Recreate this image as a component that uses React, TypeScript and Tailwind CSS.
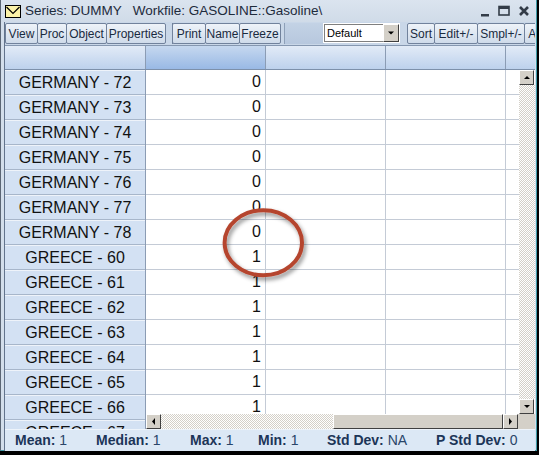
import React from "react";

const rows: [string, string][] = [
  ["GERMANY - 72", "0"],
  ["GERMANY - 73", "0"],
  ["GERMANY - 74", "0"],
  ["GERMANY - 75", "0"],
  ["GERMANY - 76", "0"],
  ["GERMANY - 77", "0"],
  ["GERMANY - 78", "0"],
  ["GREECE - 60", "1"],
  ["GREECE - 61", "1"],
  ["GREECE - 62", "1"],
  ["GREECE - 63", "1"],
  ["GREECE - 64", "1"],
  ["GREECE - 65", "1"],
  ["GREECE - 66", "1"],
  ["GREECE - 67", "1"],
];

const Btn = ({ label, w }: { label: string; w: string }) => (
  <div
    className={`${w} h-[21px] shrink-0 flex items-center justify-center border border-[#71829c] rounded-[2px] bg-gradient-to-b from-[#eef3f9] to-[#cfdbea] text-[12px] text-[#1a2a40] -ml-px first:ml-0`}
  >
    {label}
  </div>
);

const Arrow = ({ dir }: { dir: "up" | "down" | "left" | "right" }) => {
  const pts =
    dir === "up"
      ? "1,5 4,2 7,5"
      : dir === "down"
      ? "1,2 4,5 7,2"
      : dir === "left"
      ? "5,0 2,3.5 5,7"
      : "2,0 5,3.5 2,7";
  return (
    <div className="w-[15px] h-[15px] shrink-0 bg-[#d4d0c8] border-t border-l border-t-white border-l-white border-r border-b border-r-[#404040] border-b-[#404040] flex items-center justify-center">
      <svg width="8" height="8" viewBox="0 0 8 8">
        <polygon points={pts} fill="#000" />
      </svg>
    </div>
  );
};

const checker =
  "bg-[repeating-conic-gradient(#d4d0c8_0%_25%,#ffffff_0%_50%)] bg-[length:2px_2px]";

export default function App() {
  return (
    <div
      className="w-[539px] h-[455px] bg-black relative overflow-hidden"
      style={{ fontFamily: '"Liberation Sans", Arial, sans-serif' }}
    >
      <div className="w-[537px] h-[451px] bg-[#d3deeb] border-l border-l-[#5b6675] border-r border-b border-r-[#3f9aa6] border-b-[#3f9aa6] flex flex-col">
        {/* title bar */}
        <div className="h-[22px] shrink-0 flex items-center bg-gradient-to-b from-[#dbe4ef] to-[#d0dbe8]">
          <svg width="16" height="13" viewBox="0 0 16 13" className="ml-[4px]">
            <rect x="0.5" y="0.5" width="15" height="12" fill="#fbf2a8" stroke="#000" />
            <polyline points="1.5,2 8,8.5 14.5,2" fill="none" stroke="#000" strokeWidth="1.2" />
          </svg>
          <span className="ml-[4px] text-[13.5px] text-[#1e2b3c] whitespace-pre">
            {"Series: DUMMY   Workfile: GASOLINE::Gasoline\\"}
          </span>
          <div className="ml-auto mr-[6px] flex items-center gap-[8px] text-[#333c48]">
            <svg width="10" height="12" viewBox="0 0 10 12">
              <rect x="1" y="9" width="8" height="2.5" fill="#333c48" />
            </svg>
            <svg width="12" height="12" viewBox="0 0 12 12">
              <rect x="1" y="1.5" width="10" height="8.5" fill="none" stroke="#333c48" strokeWidth="1.6" />
              <rect x="1" y="1.5" width="10" height="2.5" fill="#333c48" />
            </svg>
            <svg width="12" height="12" viewBox="0 0 12 12">
              <path d="M2 2 L10 10 M10 2 L2 10" stroke="#333c48" strokeWidth="2.6" />
            </svg>
          </div>
        </div>

        {/* client */}
        <div className="ml-[3px] w-[531px] flex-1 flex flex-col border-l border-l-[#62738c]">
          {/* toolbar */}
          <div className="h-[23px] shrink-0 flex items-start pt-[1px] bg-[#c9d7e8] overflow-hidden">
            <Btn label="View" w="w-[33px]" />
            <Btn label="Proc" w="w-[30px]" />
            <Btn label="Object" w="w-[41px]" />
            <Btn label="Properties" w="w-[60px]" />
            <div className="w-[6px] shrink-0" />
            <div className="w-px h-[21px] bg-[#71829c] shrink-0" />
            <Btn label="Print" w="w-[34px]" />
            <Btn label="Name" w="w-[35px]" />
            <Btn label="Freeze" w="w-[42px]" />
            <div className="w-[3px] shrink-0" />
            <div className="w-[40px] h-[21px] shrink-0 border-l border-[#8ea0b8] bg-gradient-to-b from-[#c3d2e5] to-[#b7c8de]" />
            <div className="w-[77px] h-[20px] shrink-0 border border-white bg-white flex items-center -ml-[1px]">
              <div className="flex-1 h-[18px] border border-[#7f7f7f] border-r-0 flex items-center pl-[2px] text-[11px] text-black">
                Default
              </div>
              <div className="w-[16px] h-[18px] bg-[#d4d0c8] border-t border-l border-t-white border-l-white border-r border-b border-r-[#404040] border-b-[#404040] flex items-center justify-center">
                <svg width="8" height="6" viewBox="0 0 8 6">
                  <polygon points="1,1.5 7,1.5 4,4.5" fill="#000" />
                </svg>
              </div>
            </div>
            <div className="w-[8px] shrink-0" />
            <Btn label="Sort" w="w-[28px]" />
            <Btn label="Edit+/-" w="w-[44px]" />
            <Btn label="Smpl+/-" w="w-[48px]" />
            <Btn label="Add" w="w-[30px]" />
          </div>

          {/* header row */}
          <div className="h-[25px] shrink-0 flex border-t border-t-[#8597b0] border-b border-b-[#7d90aa]">
            <div className="w-[141px] shrink-0 border-r border-r-[#8b9cb4] bg-gradient-to-b from-[#e2ebf7] to-[#bdd1ec]" />
            <div className="w-[120px] shrink-0 border-r border-r-[#8b9cb4] bg-gradient-to-b from-[#c6d8ef] to-[#99b9e5]" />
            <div className="w-[120px] shrink-0 border-r border-r-[#8b9cb4] bg-gradient-to-b from-[#e2ebf7] to-[#bdd1ec]" />
            <div className="w-[120px] shrink-0 border-r border-r-[#8b9cb4] bg-gradient-to-b from-[#e2ebf7] to-[#bdd1ec]" />
            <div className="flex-1 bg-gradient-to-b from-[#e2ebf7] to-[#bdd1ec]" />
          </div>

          {/* body */}
          <div className="h-[359px] shrink-0 flex overflow-hidden bg-white">
            {/* row headers */}
            <div className="w-[141px] shrink-0 border-r border-r-[#8b9cb4] flex flex-col overflow-hidden bg-[#d3e1f3]">
              {rows.map(([name]) => (
                <div
                  key={name}
                  className="h-[25px] shrink-0 flex items-center justify-center border-b border-b-[#a7b6ca] border-t border-t-[#eef3fa] text-[16px] text-[#111]"
                >
                  {name}
                </div>
              ))}
            </div>
            {/* data + scrollbars */}
            <div className="flex-1 flex flex-col">
              <div className="h-[344px] flex">
                <div className="w-[373px] shrink-0 overflow-hidden flex flex-col">
                  {rows.map(([name, v]) => (
                    <div key={name} className="h-[25px] shrink-0 flex border-b border-b-[#c4cbd6]">
                      <div className="w-[120px] shrink-0 border-r border-r-[#c4cbd6] flex items-center justify-end pr-[4px] text-[16px] text-[#111]">
                        {v}
                      </div>
                      <div className="w-[120px] shrink-0 border-r border-r-[#c4cbd6]" />
                      <div className="w-[120px] shrink-0 border-r border-r-[#c4cbd6]" />
                      <div className="w-[13px] shrink-0" />
                    </div>
                  ))}
                </div>
                <div className="w-[16px] shrink-0 flex flex-col">
                  <Arrow dir="up" />
                  <div className={`flex-1 ${checker}`} />
                  <Arrow dir="down" />
                </div>
              </div>
              <div className="h-[15px] flex">
                <div className="w-[372px] shrink-0 flex">
                  <Arrow dir="left" />
                  <div className={`w-[172px] shrink-0 ${checker}`} />
                  <div className="flex-1 bg-[#d4d0c8] border-t border-l border-t-white border-l-white border-r border-b border-r-[#404040] border-b-[#404040]" />
                  <Arrow dir="right" />
                </div>
                <div className="flex-1 bg-[#d4d0c8]" />
              </div>
            </div>
          </div>

          {/* status bar */}
          <div className="flex-1 flex items-center bg-[#dce8f5] border-t border-t-[#eef4fb] text-[14px] text-[#2a4569] whitespace-pre">
            <span className="w-[91px] pl-[10px] shrink-0"><b className="text-[#1c3558]">Mean:</b> 1</span>
            <span className="w-[94px] shrink-0"><b className="text-[#1c3558]">Median:</b> 1</span>
            <span className="w-[68px] shrink-0"><b className="text-[#1c3558]">Max:</b> 1</span>
            <span className="w-[69px] shrink-0"><b className="text-[#1c3558]">Min:</b> 1</span>
            <span className="w-[109px] shrink-0"><b className="text-[#1c3558]">Std Dev:</b> NA</span>
            <span className="shrink-0"><b className="text-[#1c3558]">P Std Dev:</b> 0</span>
          </div>
        </div>
      </div>

      {/* red annotation circle */}
      <svg
        className="absolute left-[215px] top-[200px] pointer-events-none"
        width="100"
        height="90"
        viewBox="0 0 100 90"
      >
        <defs>
          <filter id="sh" x="-20%" y="-20%" width="140%" height="140%">
            <feDropShadow dx="2" dy="3" stdDeviation="2" floodColor="#000" floodOpacity="0.45" />
          </filter>
        </defs>
        <ellipse cx="48.3" cy="42.8" rx="38.7" ry="32.5" fill="none" stroke="#b5452e" strokeWidth="4" filter="url(#sh)" />
      </svg>
    </div>
  );
}
